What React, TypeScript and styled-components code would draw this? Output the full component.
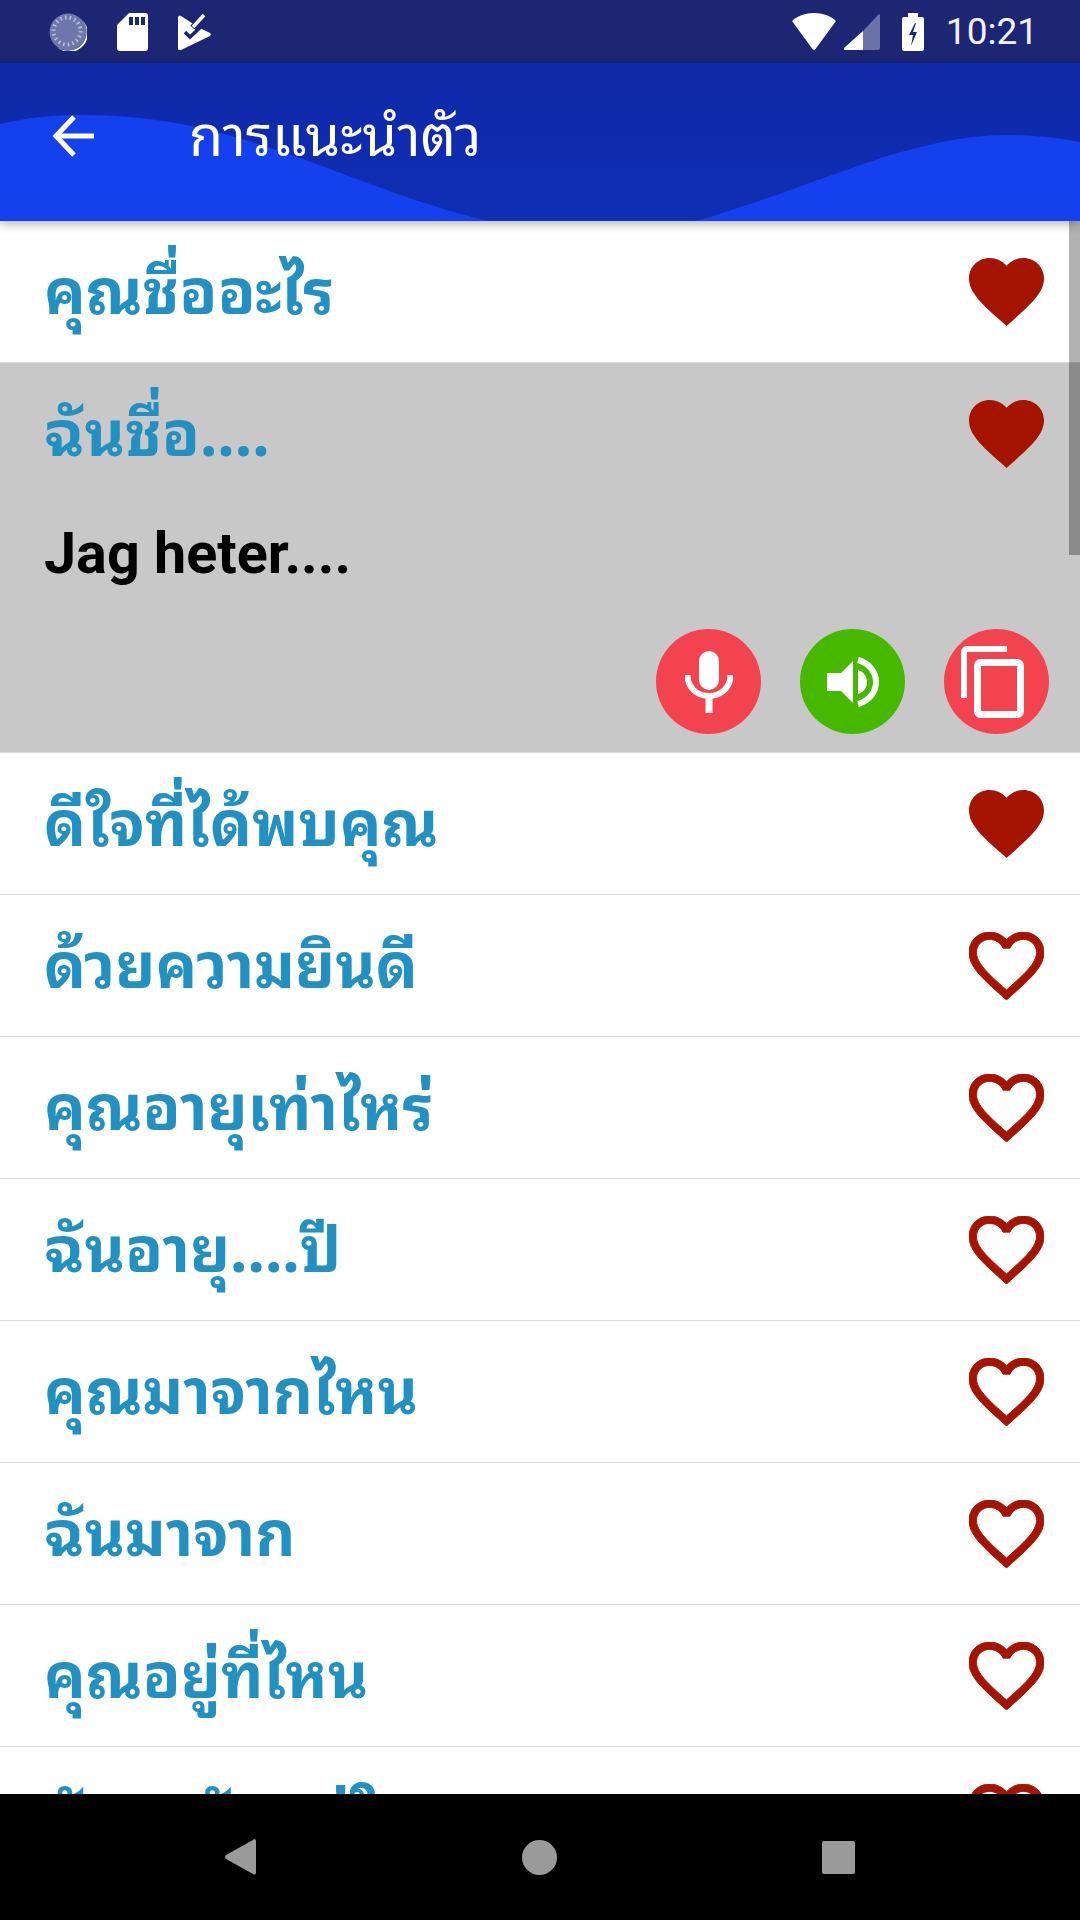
import styled, { createGlobalStyle } from 'styled-components';

const THAI = '"Noto Sans Thai Looped", "Noto Sans", Roboto, sans-serif';

const phrases = [
    { text: 'คุณชื่ออะไร', liked: true },
    { text: 'ฉันชื่อ....', liked: true, open: true, translation: 'Jag heter....' },
    { text: 'ดีใจที่ได้พบคุณ', liked: true },
    { text: 'ด้วยความยินดี', liked: false },
    { text: 'คุณอายุเท่าไหร่', liked: false },
    { text: 'ฉันอายุ....ปี', liked: false },
    { text: 'คุณมาจากไหน', liked: false },
    { text: 'ฉันมาจาก', liked: false },
    { text: 'คุณอยู่ที่ไหน', liked: false },
    { text: 'ฉันอาศัยอยู่ใน', liked: false },
];

const Heart = ({ filled }: { filled: boolean }) => (
    <HeartIcon viewBox="2 3 20 18.35" preserveAspectRatio="none">
        <path
            fill="#a51400"
            stroke="#a51400"
            strokeWidth={filled ? 0 : 0.25}
            d={
                filled
                    ? 'M12 21.35l-1.45-1.32C5.4 15.36 2 12.28 2 8.5 2 5.42 4.42 3 7.5 3c1.74 0 3.41.81 4.5 2.09C13.09 3.81 14.76 3 16.5 3 19.58 3 22 5.42 22 8.5c0 3.78-3.4 6.86-8.55 11.54L12 21.35z'
                    : 'M16.5 3c-1.74 0-3.41.81-4.5 2.09C10.91 3.81 9.24 3 7.5 3 4.42 3 2 5.42 2 8.5c0 3.78 3.4 6.86 8.55 11.54L12 21.35l1.45-1.32C18.6 15.36 22 12.28 22 8.5 22 5.42 19.58 3 16.5 3zm-4.4 15.55l-.1.1-.1-.1C7.14 14.24 4 11.39 4 8.5 4 6.5 5.5 5 7.5 5c1.54 0 3.04.99 3.57 2.36h1.87C13.46 5.99 14.96 5 16.5 5c2 0 3.5 1.5 3.5 3.5 0 2.89-3.14 5.74-7.9 10.05z'
            }
        />
    </HeartIcon>
);

const App = () => {
    return (
        <Screen>
            <GlobalStyle />
            <StatusBar>
                <StatusGroup>
                    <svg width="38" height="38" viewBox="0 0 38 38">
                        <circle cx="19" cy="19" r="18.500" fill="#6f76ab" />
                        <circle cx="18" cy="18" r="13.500" fill="none" stroke="#b9bcd8" strokeWidth="4" strokeDasharray="1.6 3.1" />
                        <path d="M33 7a18.500 18.500 0 0 1-25 27 17 17 0 0 0 25-27z" fill="#fff" />
                    </svg>
                    <svg width="31" height="38" viewBox="0 0 31 38">
                        <path fill="#fff" d="M12 0h16a3 3 0 0 1 3 3v32a3 3 0 0 1-3 3H3a3 3 0 0 1-3-3V12z" />
                        <path fill="#1c2672" d="M12 4h4v8h-4zM18 4h4v8h-4zM24 4h4v8h-4z" />
                    </svg>
                    <svg width="33" height="36" viewBox="0 0 33 36">
                        <path fill="#fff" d="M0 3a2 2 0 0 1 3-1l17 11 12 6a2 2 0 0 1 0 3L3 36a2 2 0 0 1-3-2z" />
                        <path fill="none" stroke="#1c2672" strokeWidth="3.500" d="M7 18l5 5 15-14" />
                        <path fill="none" stroke="#1c2672" strokeWidth="7" d="M15 14L27 0" />
                        <path fill="none" stroke="#fff" strokeWidth="3.500" d="M15 13L26 1" />
                    </svg>
                </StatusGroup>
                <StatusGroup $gap={8}>
                    <svg width="44" height="37" viewBox="0 0 44 37">
                        <path fill="#fff" d="M22 0c9 0 16 3 21 7a1.500 1.500 0 0 1 .3 2L23.500 36a2 2 0 0 1-3 0L.7 9A1.500 1.500 0 0 1 1 7C6 3 13 0 22 0z" />
                    </svg>
                    <svg width="36" height="36" viewBox="0 0 36 36">
                        <path fill="#6b72a8" d="M19 17L34 1a1 1 0 0 1 2 1v32a2 2 0 0 1-2 2H19z" />
                        <path fill="#fff" d="M19 17v19H1a1 1 0 0 1-1-2z" />
                    </svg>
                    <BatteryIcon width="22" height="38" viewBox="0 0 22 38">
                        <path fill="#fff" d="M6 0h10v4h4a2 2 0 0 1 2 2v30a2 2 0 0 1-2 2H2a2 2 0 0 1-2-2V6a2 2 0 0 1 2-2h4z" />
                        <path fill="#1c2672" d="M13 10L7 22h4l-2 11 6-14h-4l3-9z" />
                    </BatteryIcon>
                    <Clock>10:21</Clock>
                </StatusGroup>
            </StatusBar>

            <Toolbar>
                <Wave viewBox="0 0 1080 158" preserveAspectRatio="none">
                    <path
                        fill="#1440ee"
                        d="M0 61C30 54 55 52 79 52C180 52 240 75 300 95C370 120 420 142 489 158H695C760 140 820 115 884 94C925 82 965 72 1005 72C1035 72 1060 75 1080 79V158H0z"
                    />
                </Wave>
                <BackIcon width="42" height="42" viewBox="0 0 42 42">
                    <path d="M41 21H4M21 2L3 21l18 19" fill="none" stroke="#fff" strokeWidth="5" />
                </BackIcon>
                <Title>การแนะนำตัว</Title>
            </Toolbar>

            <ListArea>
                <List>
                    {phrases.map((p) => (
                        <Row key={p.text} $open={p.open}>
                            <RowHead>
                                <Phrase>{p.text}</Phrase>
                                <Heart filled={p.liked} />
                            </RowHead>
                            {p.open && (
                                <>
                                    <Translation>{p.translation}</Translation>
                                    <Actions>
                                        <ActionButton $color="#f2434f">
                                            <svg width="48" height="62" viewBox="0 0 48 62">
                                                <rect x="14" y="0" width="20" height="39" rx="10" fill="#fff" />
                                                <path d="M2.500 24c0 13 10 21 21.500 21s21.500-8 21.500-21" fill="none" stroke="#fff" strokeWidth="6" />
                                                <rect x="20.500" y="44" width="7" height="18" fill="#fff" />
                                            </svg>
                                        </ActionButton>
                                        <ActionButton $color="#46b800">
                                            <svg width="52" height="50" viewBox="0 0 52 50">
                                                <path fill="#fff" d="M0 16h14L26 4v42L14 34H0z" />
                                                <path fill="#fff" d="M31 13c6 2 9 7 9 12s-3 10-9 12z" />
                                                <path fill="none" stroke="#fff" strokeWidth="6" d="M31 3c11 3 18 12 18 22s-7 19-18 22" />
                                            </svg>
                                        </ActionButton>
                                        <ActionButton $color="#f2434f">
                                            <CopyIcon width="63" height="72" viewBox="0 0 63 72">
                                                <path fill="none" stroke="#fff" strokeWidth="6" d="M46 3H6a3 3 0 0 0-3 3v46" />
                                                <rect x="16.500" y="16.500" width="43" height="52" rx="3" fill="none" stroke="#fff" strokeWidth="7" />
                                            </CopyIcon>
                                        </ActionButton>
                                    </Actions>
                                </>
                            )}
                        </Row>
                    ))}
                </List>
                <ScrollThumb />
            </ListArea>

            <NavBar>
                <svg width="32" height="36" viewBox="0 0 32 36">
                    <path fill="#9a9a9a" d="M29 0a2 2 0 0 1 2 2v32a2 2 0 0 1-3 1L1 20a3 3 0 0 1 0-4L28 1z" />
                </svg>
                <NavDot />
                <NavSquare />
            </NavBar>
        </Screen>
    );
};

export default App;

const GlobalStyle = createGlobalStyle`
    html, body {
        margin: 0;
        padding: 0;
        background: #fff;
    }
`;

const Screen = styled.div`
    width: 1080px;
    height: 1920px;
    display: flex;
    flex-direction: column;
    overflow: hidden;
    font-family: ${THAI};
`;

const StatusBar = styled.div`
    height: 63px;
    flex: none;
    display: flex;
    align-items: center;
    justify-content: space-between;
    padding: 0 42px 0 49px;
    background: #1c2672;
`;

const StatusGroup = styled.div<{ $gap?: number }>`
    display: flex;
    align-items: center;
    gap: ${(p) => p.$gap ?? 30}px;
`;

const BatteryIcon = styled.svg`
    margin: 0 14px 0 14px;
`;

const Clock = styled.span`
    font-family: Roboto, sans-serif;
    font-size: 37px;
    color: #f2f2f6;
`;

const Toolbar = styled.div`
    position: relative;
    z-index: 1;
    height: 158px;
    box-sizing: border-box;
    flex: none;
    display: flex;
    align-items: center;
    gap: 94px;
    padding: 0 0 12px 53px;
    background: linear-gradient(#0f28a8, #0f2fb4);
    box-shadow: 0 3px 10px rgba(0, 0, 0, 0.3);
`;

const Wave = styled.svg`
    position: absolute;
    inset: 0;
    width: 100%;
    height: 100%;
`;

const BackIcon = styled.svg`
    position: relative;
    flex: none;
`;

const Title = styled.div`
    position: relative;
    margin-bottom: 10px;
    font-size: 55.500px;
    line-height: 70px;
    color: #fff;
`;

const ListArea = styled.div`
    position: relative;
    flex: 1;
    min-height: 0;
    overflow: hidden;
`;

const List = styled.div`
    display: flex;
    flex-direction: column;
`;

const Row = styled.div<{ $open?: boolean }>`
    display: flex;
    flex-direction: column;
    flex: none;
    height: ${(p) => (p.$open ? 390 : 142)}px;
    box-sizing: border-box;
    background: ${(p) => (p.$open ? '#c8c8c8' : '#fff')};
    border-bottom: 1px solid #dcdcdc;
`;

const RowHead = styled.div`
    height: 141px;
    flex: none;
    display: flex;
    align-items: center;
    justify-content: space-between;
    padding: 0 36px 0 44px;
`;

const Phrase = styled.div`
    margin-bottom: 12px;
    font-size: 62px;
    line-height: 80px;
    font-weight: 700;
    color: #2291c1;
`;

const HeartIcon = styled.svg`
    width: 75px;
    height: 68px;
    flex: none;
`;

const Translation = styled.div`
    padding-left: 44px;
    margin-top: 17px;
    font-family: Roboto, sans-serif;
    font-size: 57.500px;
    font-weight: 700;
    line-height: 66px;
    color: #000;
`;

const Actions = styled.div`
    display: flex;
    justify-content: flex-end;
    gap: 39px;
    margin-top: 42px;
    padding-right: 31px;
`;

const ActionButton = styled.div<{ $color: string }>`
    width: 105px;
    height: 105px;
    border-radius: 50%;
    display: flex;
    align-items: center;
    justify-content: center;
    background: ${(p) => p.$color};
`;

const CopyIcon = styled.svg`
    margin-right: 8px;
`;

const ScrollThumb = styled.div`
    position: absolute;
    top: 0;
    right: 0;
    width: 11px;
    height: 334px;
    background: rgba(0, 0, 0, 0.3);
`;

const NavBar = styled.div`
    position: relative;
    height: 126px;
    flex: none;
    display: flex;
    align-items: center;
    padding-left: 225px;
    gap: 265px;
    background: #000;
`;

const NavDot = styled.div`
    width: 35px;
    height: 35px;
    border-radius: 50%;
    background: #9a9a9a;
`;

const NavSquare = styled.div`
    width: 33px;
    height: 33px;
    border-radius: 2px;
    background: #9a9a9a;
`;
